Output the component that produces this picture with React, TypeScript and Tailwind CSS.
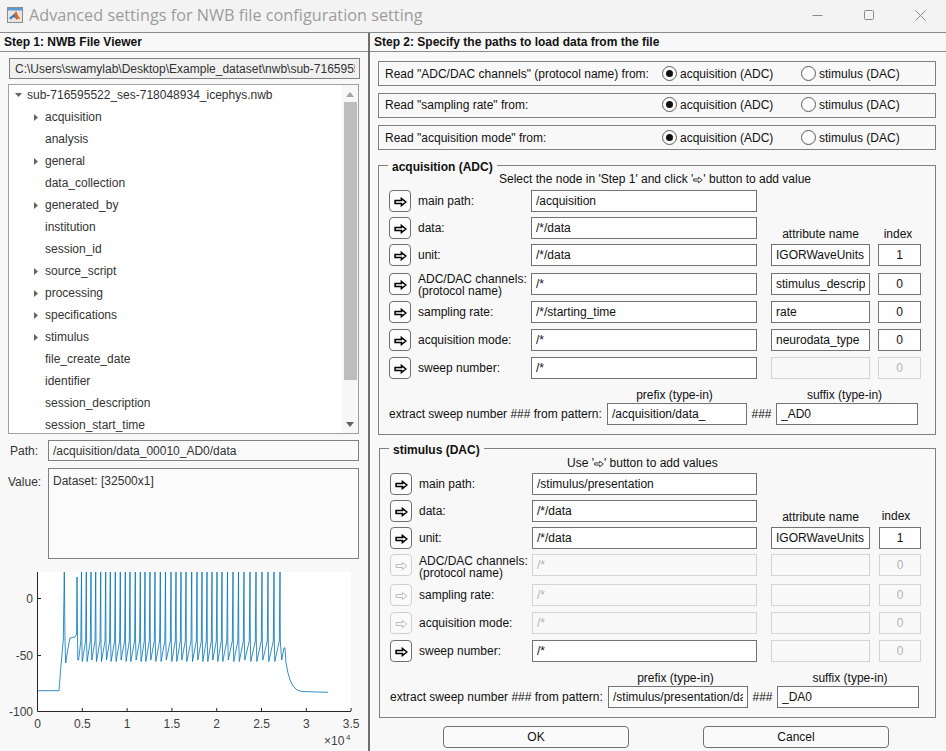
import type { ReactNode } from "react";

const treeItems = [
  { name: "acquisition", arrow: true },
  { name: "analysis" },
  { name: "general", arrow: true },
  { name: "data_collection" },
  { name: "generated_by", arrow: true },
  { name: "institution" },
  { name: "session_id" },
  { name: "source_script", arrow: true },
  { name: "processing", arrow: true },
  { name: "specifications", arrow: true },
  { name: "stimulus", arrow: true },
  { name: "file_create_date" },
  { name: "identifier" },
  { name: "session_description" },
  { name: "session_start_time" },
];

const spikes = [
  81.5, 86.3, 91, 95.7, 100.7, 105.7, 110.3, 115.3, 120.3, 125.3, 130, 135.3, 140.3, 145, 150, 155,
  160.3, 165.5, 171, 176, 181, 186, 191.7, 197, 202, 207, 212, 217, 222, 227.5, 233, 238.5, 244,
  250, 256, 262, 268, 274, 280,
];

// trace in chart pixels, spikes run past the top of the axes
function tracePath() {
  let d = "M37 130.7 L59 130.7 L61 105 L63.3 80 L64.3 12 L65 80 L65.7 103 L68 88 L70 78 L75 77 L76.6 74 L77 17 L77.5 75 L77.8 100 ";
  spikes.forEach((x, i) => {
    const prev = i === 0 ? 77.8 : spikes[i - 1];
    const low = i % 3 === 0 ? 100 : 101.5;
    d += `L${prev + 0.8} ${low} L${x - 0.7} 81 L${x} 12 L${x + 0.3} 81 `;
  });
  d += "L281.7 100 L284 87.7 L285 88 L286 103 L288 113 L290 120 L293 126 L297 130 L302 131.5 L328 132.3";
  return d;
}

function ArrowIcon({ off, small }: { off?: boolean; small?: boolean }) {
  if (small) {
    return (
      <svg width="10" height="8" viewBox="0 0 14 10" className="inline-block align-[-1px]">
        <path d="M1 3.5H8V1L13 5L8 9V6.5H1Z" fill="none" stroke="#222" strokeWidth="1.2" />
      </svg>
    );
  }
  return (
    <svg width="13" height="10" viewBox="0 0 14 10" className="mt-[2px]">
      <path
        d="M1.2 3.4H8V1.2L12.8 5L8 8.8V6.6H1.2Z"
        fill="none"
        stroke={off ? "#b4b4b4" : "#000"}
        strokeWidth={off ? 1 : 1.7}
      />
    </svg>
  );
}

function AddButton({ off }: { off?: boolean }) {
  return (
    <button
      className={
        off
          ? "flex h-[22px] w-[22px] shrink-0 items-center justify-center rounded-[4px] border border-[#d0d0d0] bg-[#fafafa]"
          : "flex h-[22px] w-[22px] shrink-0 items-center justify-center rounded-[4px] border border-[#707070] bg-[#fcfcfc]"
      }
    >
      <ArrowIcon off={off} />
    </button>
  );
}

function Field({ value, off, className, center }: { value: string; off?: boolean; className: string; center?: boolean }) {
  return (
    <input
      readOnly
      disabled={off}
      value={value}
      className={[
        "h-[22px] shrink-0 border px-[4px] text-[12px] outline-none",
        center ? "text-center" : "",
        off ? "border-[#d4d4d4] bg-[#f9f9f9] text-[#b4b4b4]" : "border-[#737373] bg-[#fefefe] text-[#111]",
        className,
      ].join(" ")}
    />
  );
}

type RowProps = {
  label: ReactNode;
  labelClass?: string;
  path: string;
  attr?: string;
  index?: string;
  off?: boolean;
  attrOff?: boolean;
  head?: boolean;
  stim?: boolean;
  className?: string;
};

function PathRow({ label, labelClass, path, attr, index, off, attrOff, head, stim, className }: RowProps) {
  return (
    <div className={`flex h-[22px] items-center ${className ?? ""}`}>
      <AddButton off={off} />
      <div className={`ml-[7px] w-[113px] shrink-0 text-[12px] leading-[12px] text-[#111] ${labelClass ?? ""}`}>{label}</div>
      <Field value={path} off={off} className={stim ? "w-[225px]" : "w-[226px]"} />
      {head && (
        <>
          <div className="ml-[14px] flex h-full w-[99px] items-center justify-center pt-[11px] text-[12px] text-[#111]">
            attribute name
          </div>
          <div
            className={
              stim
                ? "ml-[9px] flex h-full w-[42px] items-center justify-center pr-[8px] pt-[10px] text-[12px] text-[#111]"
                : "ml-[8px] flex h-full w-[43px] items-center justify-center pr-[3px] pt-[11px] text-[12px] text-[#111]"
            }
          >
            index
          </div>
        </>
      )}
      {index !== undefined && (
        <>
          <Field value={attr ?? ""} off={attrOff} className="ml-[14px] w-[99px]" />
          <Field value={index} off={attrOff} center className={stim ? "ml-[9px] w-[42px]" : "ml-[8px] w-[43px]"} />
        </>
      )}
    </div>
  );
}

function Pattern({ prefix, suffix, stim }: { prefix: string; suffix: string; stim?: boolean }) {
  return (
    <div className="grid grid-cols-[218px_140px_29px_142px] grid-rows-[16px_22px] items-center text-[12px] text-[#111]">
      <div />
      <div className={stim ? "pr-[5px] text-center" : "pb-[1px] pr-[5px] text-center"}>prefix (type-in)</div>
      <div />
      <div className={stim ? "pl-[4px] text-center" : "pb-[1px] pr-[5px] text-center"}>suffix (type-in)</div>
      <div>extract sweep number ### from pattern:</div>
      <Field value={prefix} className="w-[140px]" />
      <div className="text-center">###</div>
      <Field value={suffix} className="w-[142px]" />
    </div>
  );
}

function Group({ title, note, noteClass, className, children }: { title: string; note: ReactNode; noteClass: string; className: string; children: ReactNode }) {
  return (
    <div className={`relative h-[270px] border border-[#808080] px-[10px] ${className}`}>
      <div className="absolute -top-[6px] left-[9px] bg-[#f8f8f8] px-[4px] text-[12px] font-bold leading-[14px] text-[#111]">
        {title}
      </div>
      <div className={`flex h-[24px] items-center text-[12px] text-[#111] ${noteClass}`}>{note}</div>
      {children}
    </div>
  );
}

function Radio({ on, label }: { on?: boolean; label: string }) {
  return (
    <div className="flex w-[139px] shrink-0 items-center text-[12px] text-[#111]">
      <span className="mr-[3px] flex h-[15px] w-[15px] items-center justify-center rounded-full border border-[#5a5a5a] bg-[#fcfcfc]">
        {on && <span className="h-[7px] w-[7px] rounded-full bg-[#111]" />}
      </span>
      {label}
    </div>
  );
}

function ReadBox({ label, className }: { label: string; className?: string }) {
  return (
    <div className={`flex h-[25px] items-center border border-[#808080] pl-[6px] text-[12px] text-[#111] ${className ?? ""}`}>
      <div className="w-[277px] shrink-0">{label}</div>
      <Radio on label="acquisition (ADC)" />
      <Radio label="stimulus (DAC)" />
    </div>
  );
}

function AppIcon() {
  return (
    <svg width="16" height="16" viewBox="0 0 16 16" className="shrink-0">
      <rect x="0.5" y="0.5" width="15" height="15" fill="#e6e6e6" stroke="#8c8c8c" />
      <rect x="1" y="1" width="14" height="2.5" fill="#5b9bd5" />
      <path d="M2 11L5.5 8.2L7.4 6.2L9 11L6 10.2L4 12.5Z" fill="#2f79c4" />
      <path d="M7.4 6.2L9.2 4L11 8.5L13.6 12.6L11.4 11.5L9 13L8 9Z" fill="#e2631e" />
    </svg>
  );
}

function Chart() {
  const xTicks = ["0", "0.5", "1", "1.5", "2", "2.5", "3", "3.5"];
  return (
    <svg width="368" height="191" viewBox="0 0 368 191" className="mt-px block">
      <rect x="37" y="12" width="314" height="139" fill="#fff" />
      <path d={tracePath()} fill="none" stroke="#0072bd" strokeWidth="0.8" />
      <path d="M37.5 12V151.5H351" fill="none" stroke="#262626" strokeWidth="1" />
      <path d="M37.5 38.5H41M37.5 95.5H41" stroke="#262626" strokeWidth="1" />
      {xTicks.map((t, i) => (
        <g key={t}>
          <path d={`M${37.5 + i * 44.8} 151V148`} stroke="#262626" strokeWidth="1" />
          <text x={37.5 + i * 44.8} y="168" textAnchor="middle" fontSize="12" fill="#404040" fontFamily="Liberation Sans, sans-serif">
            {t}
          </text>
        </g>
      ))}
      <g fontSize="12" fill="#404040" fontFamily="Liberation Sans, sans-serif" textAnchor="end">
        <text x="33" y="43">0</text>
        <text x="33" y="100">-50</text>
        <text x="33" y="156">-100</text>
      </g>
      <text x="324" y="185" fontSize="12" fill="#404040" fontFamily="Liberation Sans, sans-serif">
        ×10
      </text>
      <text x="346" y="180" fontSize="8" fill="#404040" fontFamily="Liberation Sans, sans-serif">
        4
      </text>
    </svg>
  );
}

export default function App() {
  return (
    <div className="h-[751px] w-[946px] overflow-hidden bg-[#f8f8f8] font-['Liberation_Sans',Arial,sans-serif]">
      {/* title bar */}
      <div className="flex h-[33px] items-center border-b border-[#8a8a8a] bg-[#f3f3f3] pb-[2px] pl-[7px]">
        <AppIcon />
        <div className="ml-[6px] font-['Open_Sans',sans-serif] text-[16.25px] text-[#9c9c9c]">
          Advanced settings for NWB file configuration setting
        </div>
        <div className="ml-auto mr-[20px] flex items-center gap-[41px]">
          <svg width="11" height="11" viewBox="0 0 11 11">
            <path d="M0.5 5.5H10.5" stroke="#8a8a8a" />
          </svg>
          <svg width="10" height="10" viewBox="0 0 10 10">
            <rect x="0.5" y="0.5" width="9" height="9" rx="1" fill="none" stroke="#8a8a8a" />
          </svg>
          <svg width="11" height="11" viewBox="0 0 11 11">
            <path d="M0.5 0.5L10.5 10.5M10.5 0.5L0.5 10.5" stroke="#8a8a8a" />
          </svg>
        </div>
      </div>

      <div className="flex">
        {/* Step 1 */}
        <div className="w-[368px] shrink-0">
          <div className="flex h-[19px] items-center border-b border-[#8a8a8a] pl-[4px] text-[12px] font-bold text-[#111]">
            Step 1: NWB File Viewer
          </div>
          <div className="pl-[8px]">
            <input
              readOnly
              value="C:\Users\swamylab\Desktop\Example_dataset\nwb\sub-716595522_ses-718048934_icephys.nwb"
              className="mt-[6px] ml-px block h-[21px] w-[351px] border border-[#808080] bg-[#f0f0f0] pl-[5px] pr-[4px] text-[12px] text-[#333] outline-none"
            />
            <div className="mt-[5px] flex h-[350px] w-[351px] overflow-hidden border border-[#a0a0a0] bg-white">
              <div className="-mt-px min-w-0 flex-1 text-[12px] text-[#333]">
                <div className="flex h-[22px] items-center">
                  <svg width="7" height="4" viewBox="0 0 7 4" className="ml-[6px] mr-[5px]">
                    <path d="M0 0H7L3.5 4Z" fill="#666" />
                  </svg>
                  sub-716595522_ses-718048934_icephys.nwb
                </div>
                {treeItems.map((item) => (
                  <div key={item.name} className="flex h-[22px] items-center pl-[25px]">
                    <span className="w-[11px]">
                      {item.arrow && (
                        <svg width="4" height="7" viewBox="0 0 4 7">
                          <path d="M0 0L4 3.5L0 7Z" fill="#666" />
                        </svg>
                      )}
                    </span>
                    {item.name}
                  </div>
                ))}
              </div>
              <div className="flex w-[16px] shrink-0 flex-col items-center bg-[#f7f7f7]">
                <svg width="8" height="5" viewBox="0 0 8 5" className="mt-[7px]">
                  <path d="M0 5H8L4 0Z" fill="#a3a3a3" />
                </svg>
                <div className="mt-[5px] h-[278px] w-[13px] bg-[#bdbdbd]" />
                <svg width="8" height="5" viewBox="0 0 8 5" className="mt-auto mb-[6px]">
                  <path d="M0 0H8L4 5Z" fill="#606060" />
                </svg>
              </div>
            </div>
            <div className="mt-[6px] flex h-[21px] items-center text-[12px] text-[#333]">
              <div className="w-[40px] pl-[2px]">Path:</div>
              <input
                readOnly
                value="/acquisition/data_00010_AD0/data"
                className="h-[21px] w-[311px] border border-[#808080] bg-[#fafafa] px-[4px] text-[12px] text-[#333] outline-none"
              />
            </div>
            <div className="mt-[7px] flex text-[12px] text-[#333]">
              <div className="w-[40px] pt-[5px]">Value:</div>
              <div className="h-[91px] w-[311px] border border-[#808080] bg-[#fbfbfb] px-[4px] py-[3px]">Dataset: [32500x1]</div>
            </div>
          </div>
          <Chart />
        </div>

        {/* Step 2 */}
        <div className="h-[718px] min-w-0 flex-1 border-l-2 border-[#6e6e6e]">
          <div className="flex h-[19px] items-center border-b border-[#8a8a8a] pl-[4px] text-[12px] font-bold text-[#111]">
            Step 2: Specify the paths to load data from the file
          </div>
          <div className="pl-[8px] pr-[10px]">
            <ReadBox className="mt-[9px]" label={'Read "ADC/DAC channels" (protocol name) from:'} />
            <ReadBox className="mt-[7px] pb-[2px]" label={'Read "sampling rate" from:'} />
            <ReadBox className="mt-[7px]" label={'Read "acquisition mode" from:'} />

            <Group
              title="acquisition (ADC)"
              className="mt-[15px]"
              noteClass="pl-[110px] pt-[2px]"
              note={
                <span>
                  Select the node in 'Step 1' and click '<ArrowIcon small />' button to add value
                </span>
              }
            >
              <PathRow label="main path:" path="/acquisition" />
              <PathRow className="mt-[5px]" label="data:" path="/*/data" head />
              <PathRow className="mt-[5px]" label="unit:" path="/*/data" attr="IGORWaveUnits" index="1" />
              <PathRow
                className="mt-[7px]"
                labelClass="pt-[1px]"
                label={
                  <>
                    ADC/DAC channels:
                    <br />
                    (protocol name)
                  </>
                }
                path="/*"
                attr="stimulus_descrip"
                index="0"
              />
              <PathRow className="mt-[6px]" label="sampling rate:" path="/*/starting_time" attr="rate" index="0" />
              <PathRow className="mt-[6px]" label="acquisition mode:" path="/*" attr="neurodata_type" index="0" />
              <PathRow className="mt-[6px]" label="sweep number:" path="/*" index="0" attrOff />
              <div className="mt-[8px]">
                <Pattern prefix="/acquisition/data_" suffix="_AD0" />
              </div>
            </Group>

            <Group
              title="stimulus (DAC)"
              className="ml-px mt-[13px]"
              noteClass="pl-[177px] pt-[3px]"
              note={
                <span>
                  Use '<ArrowIcon small />' button to add values
                </span>
              }
            >
              <PathRow stim label="main path:" path="/stimulus/presentation" />
              <PathRow stim className="mt-[5px]" label="data:" path="/*/data" head />
              <PathRow stim className="mt-[5px]" label="unit:" path="/*/data" attr="IGORWaveUnits" index="1" />
              <PathRow
                stim
                off
                attrOff
                className="mt-[5px]"
                labelClass="pt-[4px]"
                label={
                  <>
                    ADC/DAC channels:
                    <br />
                    (protocol name)
                  </>
                }
                path="/*"
                index="0"
              />
              <PathRow stim off attrOff className="mt-[8px]" label="sampling rate:" path="/*" index="0" />
              <PathRow stim off attrOff className="mt-[6px]" label="acquisition mode:" path="/*" index="0" />
              <PathRow stim attrOff className="mt-[6px]" label="sweep number:" path="/*" index="0" />
              <div className="mt-[8px]">
                <Pattern stim prefix="/stimulus/presentation/data_" suffix="_DA0" />
              </div>
            </Group>

            <div className="mt-[8px] flex gap-[74px] pl-[65px] text-[12px] text-[#111]">
              <button className="h-[22px] w-[186px] rounded-[4px] border border-[#707070] bg-[#fafafa]">OK</button>
              <button className="h-[22px] w-[186px] rounded-[4px] border border-[#707070] bg-[#fafafa]">Cancel</button>
            </div>
          </div>
        </div>
      </div>
    </div>
  );
}
